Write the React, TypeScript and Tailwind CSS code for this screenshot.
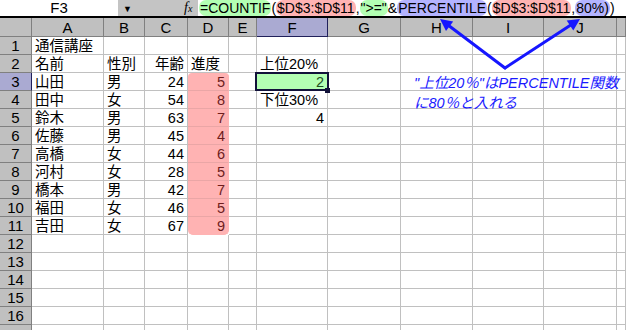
import React from "react";
import clsx from "clsx";

// 名前, 性別, 年齢, 進度
const people = [
  ["山田", "男", "24", "5"],
  ["田中", "女", "54", "8"],
  ["鈴木", "男", "63", "7"],
  ["佐藤", "男", "45", "4"],
  ["高橋", "女", "44", "6"],
  ["河村", "女", "28", "5"],
  ["橋本", "男", "42", "7"],
  ["福田", "女", "46", "5"],
  ["吉田", "女", "67", "9"],
];

type Row = { a?: string; b?: string; c?: string; d?: string; f?: string; fRight?: boolean };

const rows: Row[] = [];
rows.push({ a: "通信講座" });
rows.push({ a: "名前", b: "性別", c: "年齢", d: "進度", f: "上位20%" });
people.forEach((p) => rows.push({ a: p[0], b: p[1], c: p[2], d: p[3] }));
rows[2].f = "2";
rows[3].f = "下位30%";
rows[4].f = "4";
rows[4].fRight = true;
for (let i = rows.length; i < 17; i++) rows.push({});

// K is only a sliver at the right edge, no letter shown
const letters = ["A", "B", "C", "D", "E", "F", "G", "H", "I", "J", ""];

const cell = "h-[18px] border-r border-b border-[#c0c0c0] px-[3px] leading-[18px] whitespace-nowrap";

const Pill = ({ color, children }: { color: string; children: React.ReactNode }) => (
  <span className={clsx("rounded-[7px] px-[1px]", color)}>{children}</span>
);

const FormulaBar = () => (
  <div className="flex h-[18px] border-b-2 border-black text-[14px] leading-[16px]">
    <div className="flex w-[118px] items-center justify-center bg-white text-[15px]">F3</div>
    <div className="relative w-[80px] bg-[#c4c4c4]">
      <span className="absolute left-[5px] top-[1px] text-[9px]">▼</span>
      <span className="absolute left-[66px] top-0 font-['Liberation_Serif',serif] text-[14px] italic">
        f<span className="text-[10px]">x</span>
      </span>
    </div>
    <div className="flex flex-1 items-center bg-white pl-[1px] whitespace-nowrap">
      <Pill color="bg-[#b3ffb3]">=COUNTIF</Pill>(
      <Pill color="bg-[#ffb3b3]">$D$3:$D$11</Pill>,
      <Pill color="bg-[#b3ffb3]">{'">="'}</Pill>&amp;
      <Pill color="bg-[#b3b3ff]">PERCENTILE</Pill>(
      <Pill color="bg-[#ffb3b3]">$D$3:$D$11</Pill>,
      <Pill color="bg-[#b3b3ff]">80%)</Pill>)
    </div>
  </div>
);

export default function App() {
  return (
    <div className="relative h-[330px] w-[626px] overflow-hidden bg-white font-['Liberation_Sans','Noto_Sans_CJK_JP',sans-serif] text-black">
      <FormulaBar />

      <div className="grid grid-cols-[32px_72px_41px_43px_41px_28px_71px_73px_72px_71px_73px_1fr] text-[14.5px]">
        {/* column headers */}
        <div className="h-[19px] border-r border-b border-[#808080] bg-[#c0c0c0]" />
        {letters.map((l, i) => (
          <div
            key={i}
            className={clsx(
              "h-[19px] border-r border-b text-center text-[15px] leading-[19px]",
              l === "F" ? "border-[#20205a] bg-[#aaaad2]" : "border-[#808080] bg-[#c0c0c0]"
            )}
          >
            {l}
          </div>
        ))}

        {rows.map((r, i) => {
          const n = i + 1;
          const pink = n >= 3 && n <= 11;
          return (
            <React.Fragment key={n}>
              <div
                className={clsx(
                  "h-[18px] border-r border-b text-center text-[15px] leading-[18px]",
                  n === 3 ? "border-r-[#20205a] border-b-[#808080] bg-[#aaaad2]" : "border-[#808080] bg-[#c0c0c0]"
                )}
              >
                {n <= 16 ? n : ""}
              </div>
              <div className={cell}>{r.a}</div>
              <div className={cell}>{r.b}</div>
              <div className={clsx(cell, "text-right")}>{r.c}</div>
              <div
                className={clsx(
                  cell,
                  pink ? "border-r-[#ffb3b3] border-b-[#eaa6a6] bg-[#ffb3b3] text-right text-[#6e1d1d]" : "",
                  n === 3 && "rounded-t-[4px]",
                  n === 11 && "rounded-b-[5px] border-b-[#ffb3b3]"
                )}
              >
                {r.d}
              </div>
              <div className={cell} />
              {n === 3 ? (
                <div className={clsx(cell, "relative bg-[#b3ffb3] text-right text-[#1f4f1f]")}>
                  {r.f}
                  <div className="absolute -top-[1px] -left-[2px] -right-[2px] -bottom-[1px] border-2 border-[#12123a]" />
                  <div className="absolute -right-[3px] -bottom-[3px] h-[5px] w-[5px] bg-[#12123a]" />
                </div>
              ) : (
                <div className={clsx(cell, r.fRight && "text-right")}>{r.f}</div>
              )}
              <div className={cell} />
              <div className={cell} />
              <div className={cell} />
              <div className={cell} />
              <div className={cell} />
            </React.Fragment>
          );
        })}
      </div>

      {/* callout arrows */}
      <svg className="pointer-events-none absolute inset-0" width="626" height="330">
        <g stroke="#1616ff" strokeWidth="3" fill="none" strokeLinecap="round">
          <path d="M505 68 L449.6 26.2" />
          <path d="M505 68 L570 25.6" />
        </g>
        <polygon points="440,19 453.2,21.4 446,31" fill="#1616ff" />
        <polygon points="580,19 573.3,30.6 566.7,20.6" fill="#1616ff" />
      </svg>

      <div className="absolute left-[414px] top-[73px] text-[14.5px] italic leading-[20px] text-[#1a1aff]">
        <div>"上位20％"はPERCENTILE関数</div>
        <div>に80％と入れる</div>
      </div>
    </div>
  );
}
